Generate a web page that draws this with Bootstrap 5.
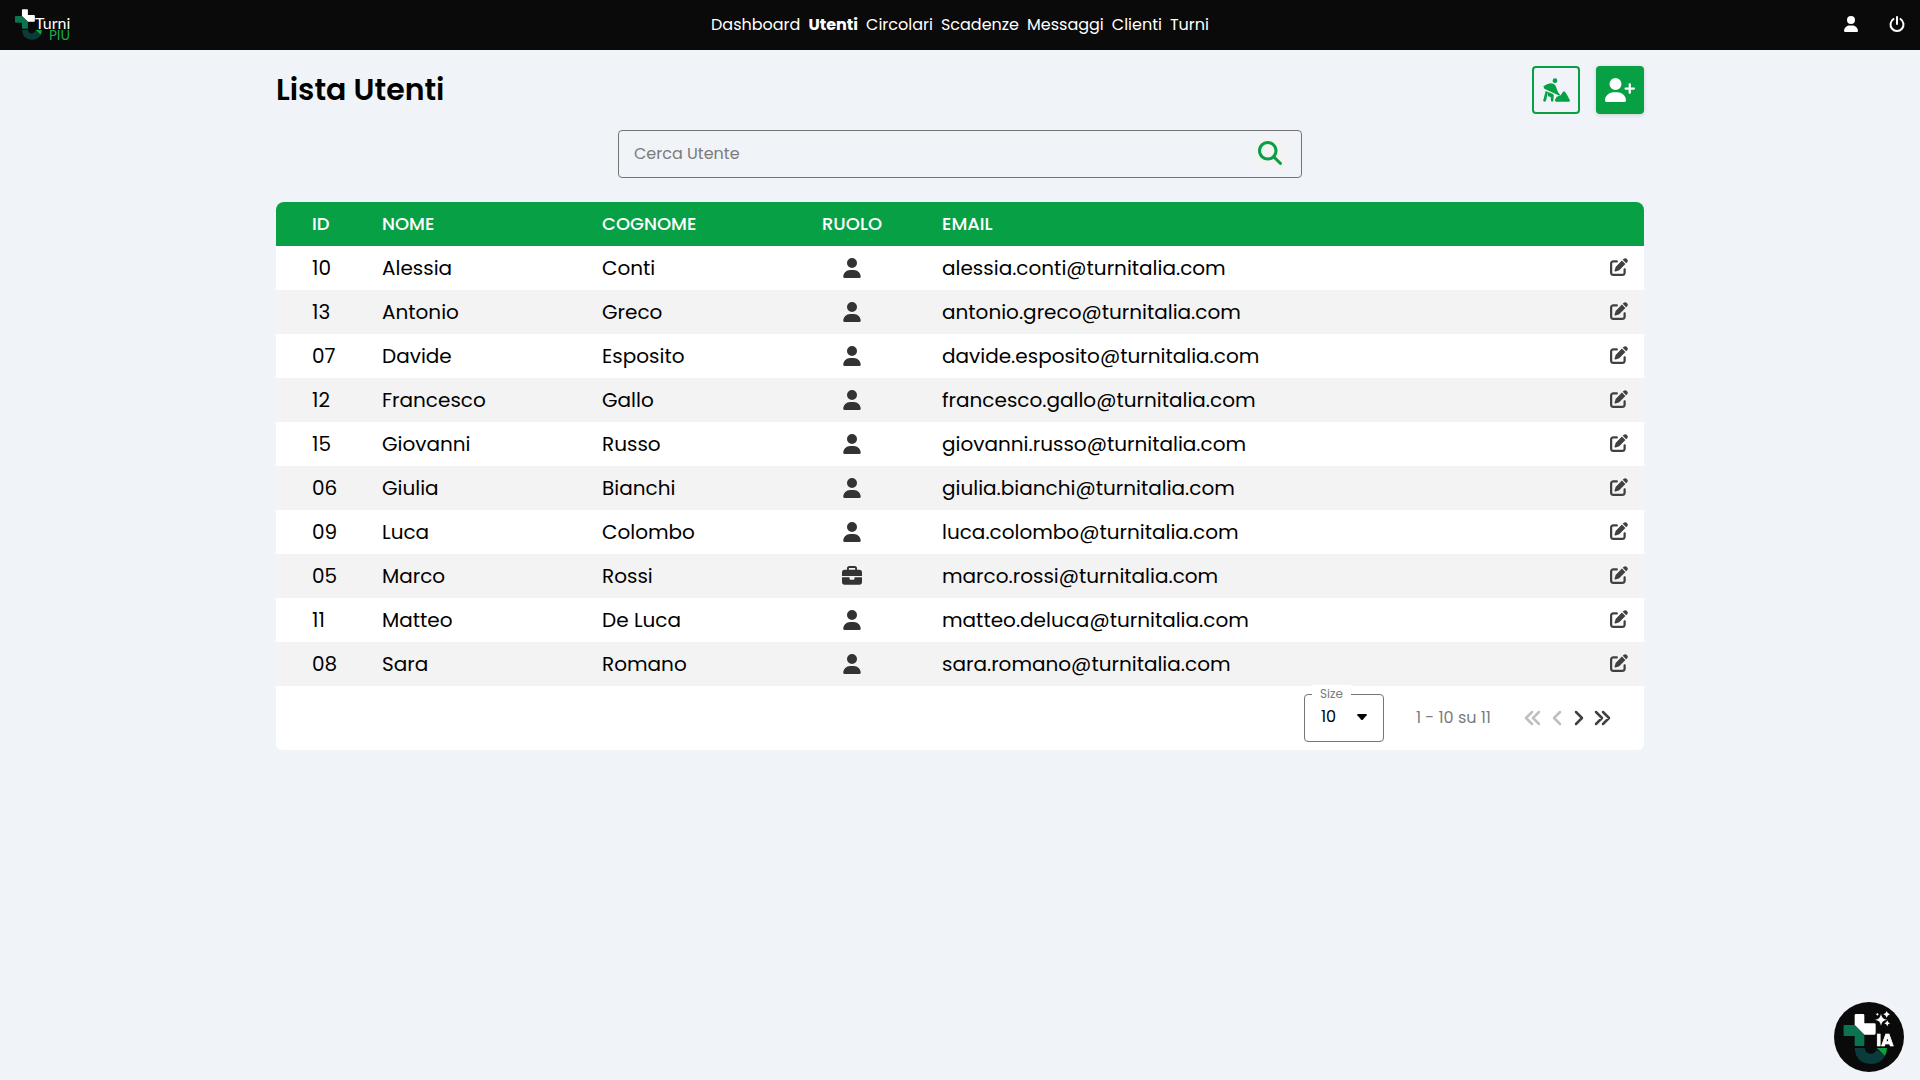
<!DOCTYPE html>
<html lang="it">
<head>
<meta charset="utf-8">
<meta name="viewport" content="width=device-width, initial-scale=1">
<title>Turni PIU - Lista Utenti</title>
<link rel="stylesheet" href="https://cdn.jsdelivr.net/npm/bootstrap@5.3.0/dist/css/bootstrap.min.css">
<style>
  :root { --brand: #08a045; --ink: #333; }
  body { font-family: Poppins, Inter, "Open Sans", sans-serif; background: #f0f4f9; color: #000; min-height: 100vh; }
  svg { display: block; fill: currentColor; }
  .topbar { background: #0a0a0a; height: 50px; padding: 0 15px; }
  .side { flex: 1 1 0; }
  .tools-end { gap: 31px; padding-bottom: 2px; }
  .topbar a { color: #fff; text-decoration: none; font-size: 16px; line-height: 24px; }
  .topbar a.active { font-weight: 700; }
  .page { max-width: 1400px; padding: 16px; }
  h1 { font-size: 30px; line-height: 48px; font-weight: 600; }
  .tool { width: 48px; height: 48px; padding: 0; border: 2px solid var(--brand); border-radius: 4px; color: var(--brand); background: transparent; }
  .tool-solid { background: var(--brand); color: #fff; box-shadow: 0 1px 4px rgba(0,0,0,.16); }
  .finder { width: 50%; height: 48px; border: 1px solid #757575; border-radius: 4px; padding: 0 14px 0 15px; }
  .finder input { background: none; border: 0; padding: 0; font-size: 16px; color: #000; box-shadow: none !important; }
  .finder input::placeholder { color: #7b7b7b; }
  .finder button { background: #f3f3f3; border: 0; padding: 3px 5px 5px; color: var(--brand); }
  .users { background: #fff; border-radius: 8px 8px 6px 6px; overflow: hidden; }
  .users table { table-layout: fixed; margin: 0; }
  .users th, .users td { height: 44px; padding: 0 0 0 16px; border: 0; vertical-align: middle; white-space: nowrap; font-size: 20px; line-height: 28px; }
  .users thead th { background: var(--brand); color: #fff; font-size: 18px; font-weight: 500; }
  .users tbody td { background: #fff; color: #000; }
  .users tbody tr:nth-child(even) td { background: #f3f3f3; }
  .users tr > :first-child { padding-left: 36px; }
  .users tr > :nth-child(4) { padding: 0 28px 0 0; text-align: center; }
  .users tr > :last-child { padding: 0 16px 0 0; }
  .users td svg { color: var(--ink); margin: 0 auto; }
  .users td button { background: none; border: 0; padding: 0 0 2px; margin-left: auto; display: block; }
  .users td button svg { color: #404040; }
  .c-id { width: 90px; } .c-name { width: 220px; } .c-role { width: 120px; } .c-edit { width: 60px; }
  .pager { height: 64px; padding: 0 33px 0 16px; color: #7b7b7b; }
  .sizer { position: relative; }
  .sizer label { position: absolute; left: 8px; top: -9px; padding: 0 8px; background: #fff; font-size: 12px; line-height: 18px; }
  .sizer select { appearance: none; width: 80px; height: 48px; border: 1px solid #757575; border-radius: 4px; background: #fff; padding: 0 16px 2px; font-size: 16px; color: #000; }
  .sizer svg { position: absolute; right: 17px; top: 20px; color: #000; pointer-events: none; }
  .pager button { background: none; border: 0; padding: 0; color: #404040; }
  .pager button:disabled { color: #bfbfbf; }
  .pager .next-group { gap: 10px; }
  .line { fill: none; stroke: currentColor; stroke-width: 2; stroke-linecap: round; stroke-linejoin: round; }
  .pager .line { stroke-width: 2.5; }
  .helper { position: fixed; right: 16px; bottom: 8px; width: 70px; height: 70px; border: 0; padding: 0; border-radius: 50%; background: #0a0a0a; }
</style>
<script src="https://cdn.jsdelivr.net/npm/bootstrap@5.3.0/dist/js/bootstrap.bundle.min.js"></script>
</head>
<body>
<svg class="d-none">
  <symbol id="person" viewBox="0 0 448 512"><path d="M224 256A128 128 0 1 0 224 0a128 128 0 1 0 0 256zm-45.700 48C79.800 304 0 383.800 0 482.300C0 498.700 13.300 512 29.700 512H418.300c16.400 0 29.700-13.300 29.700-29.700C448 383.800 368.200 304 269.700 304H178.300z"/></symbol>
  <symbol id="case" viewBox="0 0 512 512"><path d="M184 48H328c4.400 0 8 3.600 8 8V96H176V56c0-4.400 3.600-8 8-8zm-56 8V96H64C28.700 96 0 124.700 0 160v96H512V160c0-35.300-28.700-64-64-64H384V56c0-30.900-25.100-56-56-56H184c-30.900 0-56 25.100-56 56zM512 288H320v32c0 17.700-14.300 32-32 32H224c-17.700 0-32-14.300-32-32V288H0V416c0 35.300 28.700 64 64 64H448c35.300 0 64-28.700 64-64V288z"/></symbol>
  <symbol id="edit" viewBox="0 0 512 512"><path d="M471.600 21.700c-21.900-21.900-57.300-21.900-79.200 0L362.300 51.700l97.900 97.900 30.100-30.100c21.900-21.900 21.900-57.300 0-79.200L471.600 21.700zm-299.200 220c-6.100 6.100-10.800 13.600-13.500 21.900l-29.600 88.800c-2.900 8.600-.6 18.100 5.800 24.600s15.900 8.700 24.600 5.800l88.800-29.600c8.200-2.700 15.700-7.400 21.900-13.500L437.700 172.300 339.700 74.300 172.400 241.700zM96 64C43 64 0 107 0 160V416c0 53 43 96 96 96H352c53 0 96-43 96-96V320c0-17.700-14.300-32-32-32s-32 14.300-32 32v96c0 17.700-14.300 32-32 32H96c-17.700 0-32-14.300-32-32V160c0-17.700 14.300-32 32-32h96c17.700 0 32-14.300 32-32s-14.300-32-32-32H96z"/></symbol>
  <symbol id="emblem" viewBox="70 72 132 150">
    <path fill="#fff" d="M108 72h21q4 0 4 4v24h30q4 0 4 4v26q0 4-4 4h-30l-29-29V76q0-4 4-4z"/>
    <path fill="#0b7350" d="M74 105h30l29 30v29q0 4-4 4h-21q-4 0-4-4v-26H74q-4 0-4-4v-25q0-4 4-4z"/>
    <path fill="#0a3a3a" d="M104 174h30q2 17 18 17 12 0 18-12l26 17q-12 26-43 26-46-2-49-48z"/>
    <path fill="#10a040" d="M170 174h31q0 13-6 23z"/>
  </symbol>
</svg>

<header class="topbar d-flex align-items-center">
  <div class="side d-flex">
    <a href="#" class="d-block" aria-label="Turni PIU">
      <svg width="56" height="34" viewBox="0 0 56 34">
        <use href="#emblem" x="0" y="1" width="27" height="31"/>
        <text x="20" y="21" font-family="Lato, sans-serif" font-size="16" fill="#fff">Turni</text>
        <text x="34" y="32" font-family="Lato, sans-serif" font-size="13" fill="#12b048">PIU</text>
      </svg>
    </a>
  </div>
  <nav class="d-flex gap-2">
    <a href="#">Dashboard</a><a href="#" class="active" aria-current="page">Utenti</a><a href="#">Circolari</a><a href="#">Scadenze</a><a href="#">Messaggi</a><a href="#">Clienti</a><a href="#">Turni</a>
  </nav>
  <div class="side tools-end d-flex justify-content-end align-items-center">
    <a href="#" aria-label="Profilo"><svg width="14" height="16"><use href="#person"/></svg></a>
    <a href="#" aria-label="Esci"><svg class="line" width="16" height="16" viewBox="0 0 16 16"><path d="M8 1v7M4.500 3a6.500 6.500 0 1 0 7 0"/></svg></a>
  </div>
</header>

<main class="page container-fluid">
  <div class="d-flex align-items-center mb-3">
    <h1 class="m-0 me-auto">Lista Utenti</h1>
    <button class="tool btn d-flex align-items-center justify-content-center me-3" aria-label="Cantieri">
      <svg width="27" height="24" viewBox="129 82 81 72"><circle cx="165" cy="90" r="7"/><path d="M131 109q-2-3 2-4 10-6 19-7 9 0 14 6l8 20 6 8q-1 4-5 2l-42-20zM137 121l7 3-6 26q-3 5-7 2-2-1-1-4zM144 124l15 6q3 2 2 8l-1 12q-2 5-7 2l-1-13-8-2zM168 153q-4-2-3-6l5-9 9-3q4-1 6-6l4-6q3-2 6 0l5 8 9 16q2 6-3 6z"/></svg>
    </button>
    <button class="tool tool-solid btn d-flex align-items-center justify-content-center" aria-label="Aggiungi utente">
      <svg width="30" height="24" viewBox="0 0 640 512"><path d="M96 128a128 128 0 1 1 256 0A128 128 0 1 1 96 128zM0 482.300C0 383.800 79.800 304 178.300 304h91.400C368.200 304 448 383.800 448 482.300c0 16.400-13.300 29.700-29.700 29.700H29.700C13.300 512 0 498.700 0 482.300zM504 312V248H440c-13.300 0-24-10.700-24-24s10.700-24 24-24h64V136c0-13.300 10.700-24 24-24s24 10.700 24 24v64h64c13.300 0 24 10.700 24 24s-10.700 24-24 24H552v64c0 13.300-10.700 24-24 24s-24-10.700-24-24z"/></svg>
    </button>
  </div>

  <form class="finder d-flex align-items-center mx-auto mb-4">
    <input class="form-control" type="text" placeholder="Cerca Utente" aria-label="Cerca Utente">
    <button type="button" aria-label="Cerca"><svg width="24" height="24" viewBox="0 0 512 512"><path d="M416 208c0 45.900-14.900 88.300-40 122.700L502.600 457.400c12.500 12.500 12.500 32.800 0 45.300s-32.800 12.500-45.300 0L330.700 376c-34.400 25.200-76.800 40-122.700 40C93.100 416 0 322.900 0 208S93.100 0 208 0S416 93.100 416 208zM208 352a144 144 0 1 0 0-288 144 144 0 1 0 0 288z"/></svg></button>
  </form>

  <section class="users">
    <table class="table">
      <colgroup><col class="c-id"><col class="c-name"><col class="c-name"><col class="c-role"><col><col class="c-edit"></colgroup>
      <thead><tr><th>ID</th><th>NOME</th><th>COGNOME</th><th>RUOLO</th><th>EMAIL</th><th></th></tr></thead>
      <tbody>
        <tr><td>10</td><td>Alessia</td><td>Conti</td><td><svg width="18" height="20"><use href="#person"/></svg></td><td>alessia.conti@turnitalia.com</td><td><button aria-label="Modifica"><svg width="18" height="18"><use href="#edit"/></svg></button></td></tr>
        <tr><td>13</td><td>Antonio</td><td>Greco</td><td><svg width="18" height="20"><use href="#person"/></svg></td><td>antonio.greco@turnitalia.com</td><td><button aria-label="Modifica"><svg width="18" height="18"><use href="#edit"/></svg></button></td></tr>
        <tr><td>07</td><td>Davide</td><td>Esposito</td><td><svg width="18" height="20"><use href="#person"/></svg></td><td>davide.esposito@turnitalia.com</td><td><button aria-label="Modifica"><svg width="18" height="18"><use href="#edit"/></svg></button></td></tr>
        <tr><td>12</td><td>Francesco</td><td>Gallo</td><td><svg width="18" height="20"><use href="#person"/></svg></td><td>francesco.gallo@turnitalia.com</td><td><button aria-label="Modifica"><svg width="18" height="18"><use href="#edit"/></svg></button></td></tr>
        <tr><td>15</td><td>Giovanni</td><td>Russo</td><td><svg width="18" height="20"><use href="#person"/></svg></td><td>giovanni.russo@turnitalia.com</td><td><button aria-label="Modifica"><svg width="18" height="18"><use href="#edit"/></svg></button></td></tr>
        <tr><td>06</td><td>Giulia</td><td>Bianchi</td><td><svg width="18" height="20"><use href="#person"/></svg></td><td>giulia.bianchi@turnitalia.com</td><td><button aria-label="Modifica"><svg width="18" height="18"><use href="#edit"/></svg></button></td></tr>
        <tr><td>09</td><td>Luca</td><td>Colombo</td><td><svg width="18" height="20"><use href="#person"/></svg></td><td>luca.colombo@turnitalia.com</td><td><button aria-label="Modifica"><svg width="18" height="18"><use href="#edit"/></svg></button></td></tr>
        <tr><td>05</td><td>Marco</td><td>Rossi</td><td><svg width="20" height="20"><use href="#case"/></svg></td><td>marco.rossi@turnitalia.com</td><td><button aria-label="Modifica"><svg width="18" height="18"><use href="#edit"/></svg></button></td></tr>
        <tr><td>11</td><td>Matteo</td><td>De Luca</td><td><svg width="18" height="20"><use href="#person"/></svg></td><td>matteo.deluca@turnitalia.com</td><td><button aria-label="Modifica"><svg width="18" height="18"><use href="#edit"/></svg></button></td></tr>
        <tr><td>08</td><td>Sara</td><td>Romano</td><td><svg width="18" height="20"><use href="#person"/></svg></td><td>sara.romano@turnitalia.com</td><td><button aria-label="Modifica"><svg width="18" height="18"><use href="#edit"/></svg></button></td></tr>
      </tbody>
    </table>
    <div class="pager d-flex align-items-center justify-content-end">
      <div class="sizer">
        <select id="size"><option>10</option><option>25</option><option>50</option></select>
        <label for="size">Size</label>
        <svg width="10" height="6" viewBox="0 0 10 6"><path d="M1 0h8q2 1 0 2L6 5.500q-1 1-2 0L1 2Q-1 1 1 0z"/></svg>
      </div>
      <span class="mx-4 px-2">1 - 10 su 11</span>
      <div class="d-flex align-items-center">
        <button disabled aria-label="Prima pagina"><svg class="line" width="17" height="16" viewBox="0 0 17 16"><path d="M9 2L3 8l6 6M16 2l-6 6 6 6"/></svg></button>
        <button disabled aria-label="Precedente" class="mx-2 ps-1"><svg class="line" width="10" height="16" viewBox="0 0 10 16"><path d="M8 2L2 8l6 6"/></svg></button>
        <div class="next-group d-flex ms-1">
          <button aria-label="Successiva"><svg class="line" width="10" height="16" viewBox="0 0 10 16"><path d="M2 2l6 6-6 6"/></svg></button>
          <button aria-label="Ultima pagina"><svg class="line" width="17" height="16" viewBox="0 0 17 16"><path d="M2 2l6 6-6 6M9 2l6 6-6 6"/></svg></button>
        </div>
      </div>
    </div>
  </section>
</main>

<button class="helper" aria-label="Assistente IA">
  <svg width="70" height="70" viewBox="42 36 210 210">
    <use href="#emblem" x="70" y="72" width="132" height="150"/>
    <path fill="#fff" d="M183 71q2 16 18 18-16 2-18 18-2-16-18-18 16-2 18-18zM200 63q2 8 10 10-8 2-10 10-2-8-10-10 8-2 10-10zM202 91q1 7 8 9-7 2-8 9-2-7-9-9 7-2 9-9zM172 68q1 4 5 5-4 1-5 5-1-4-5-5 4-1 5-5z"/>
    <path fill="#0a0a0a" d="M168 130h62v42h-62z"/>
    <text x="169" y="167" font-family="Poppins, Inter, sans-serif" font-size="50" font-weight="700" fill="#fff" stroke="#fff" stroke-width="2">IA</text>
  </svg>
</button>
</body>
</html>
